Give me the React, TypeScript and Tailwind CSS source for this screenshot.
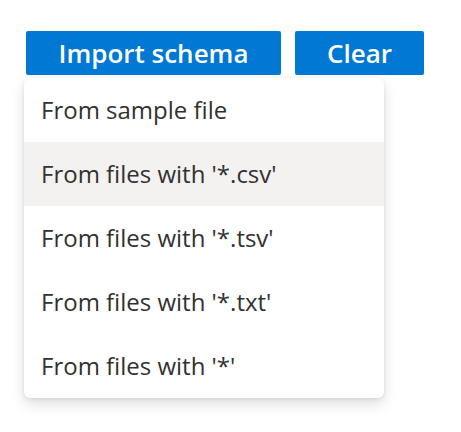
const items = [
  "From sample file",
  "From files with '*.csv'",
  "From files with '*.tsv'",
  "From files with '*.txt'",
  "From files with '*'",
];

export default function App() {
  return (
    <div
      className="w-[461px] h-[432px] bg-white"
      style={{ fontFamily: '"Open Sans", "Noto Sans", sans-serif' }}
    >
      <div className="pt-[31px] pl-[26px] flex gap-[14px]">
        <button className="w-[255px] h-[44px] bg-[#0078d4] text-white rounded-[2px] text-[26px] font-semibold leading-none">
          Import schema
        </button>
        <button className="w-[129px] h-[44px] bg-[#0078d4] text-white rounded-[2px] text-[26px] font-semibold leading-none">
          Clear
        </button>
      </div>
      <div className="mt-[3px] ml-[24px] w-[360px] bg-white rounded-[6px] shadow-[0_6px_14px_rgba(0,0,0,0.13),0_1px_4px_rgba(0,0,0,0.08)] overflow-hidden">
        {items.map((t, i) => (
          <div
            key={t}
            className={`h-[64px] flex items-center pl-[17px] text-[24px] font-normal text-[#323130] ${
              i === 1 ? "bg-[#f3f2f1]" : ""
            }`}
          >
            {t}
          </div>
        ))}
      </div>
    </div>
  );
}
